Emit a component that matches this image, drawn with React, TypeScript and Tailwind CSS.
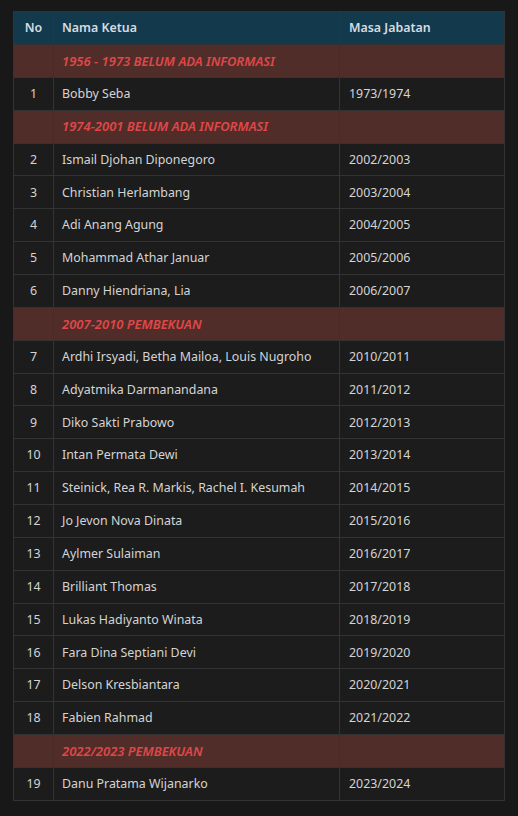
import React from "react";

type Row = { type: "section"; text: string } | { type: "data"; no: number; name: string; masa: string };

const rows: Row[] = [
  { type: "section", text: "1956 - 1973 BELUM ADA INFORMASI" },
  { type: "data", no: 1, name: "Bobby Seba", masa: "1973/1974" },
  { type: "section", text: "1974-2001 BELUM ADA INFORMASI" },
  { type: "data", no: 2, name: "Ismail Djohan Diponegoro", masa: "2002/2003" },
  { type: "data", no: 3, name: "Christian Herlambang", masa: "2003/2004" },
  { type: "data", no: 4, name: "Adi Anang Agung", masa: "2004/2005" },
  { type: "data", no: 5, name: "Mohammad Athar Januar", masa: "2005/2006" },
  { type: "data", no: 6, name: "Danny Hiendriana, Lia", masa: "2006/2007" },
  { type: "section", text: "2007-2010 PEMBEKUAN" },
  { type: "data", no: 7, name: "Ardhi Irsyadi, Betha Mailoa, Louis Nugroho", masa: "2010/2011" },
  { type: "data", no: 8, name: "Adyatmika Darmanandana", masa: "2011/2012" },
  { type: "data", no: 9, name: "Diko Sakti Prabowo", masa: "2012/2013" },
  { type: "data", no: 10, name: "Intan Permata Dewi", masa: "2013/2014" },
  { type: "data", no: 11, name: "Steinick, Rea R. Markis, Rachel I. Kesumah", masa: "2014/2015" },
  { type: "data", no: 12, name: "Jo Jevon Nova Dinata", masa: "2015/2016" },
  { type: "data", no: 13, name: "Aylmer Sulaiman", masa: "2016/2017" },
  { type: "data", no: 14, name: "Brilliant Thomas", masa: "2017/2018" },
  { type: "data", no: 15, name: "Lukas Hadiyanto Winata", masa: "2018/2019" },
  { type: "data", no: 16, name: "Fara Dina Septiani Devi", masa: "2019/2020" },
  { type: "data", no: 17, name: "Delson Kresbiantara", masa: "2020/2021" },
  { type: "data", no: 18, name: "Fabien Rahmad", masa: "2021/2022" },
  { type: "section", text: "2022/2023 PEMBEKUAN" },
  { type: "data", no: 19, name: "Danu Pratama Wijanarko", masa: "2023/2024" },
];

export default function App() {
  return (
    <div
      className="min-h-[816px] w-[518px] bg-[#181818] px-[13px] pt-[11px] text-[12.4px] text-[#d4d4d4]"
      style={{ fontFamily: '"Noto Sans", "Open Sans", sans-serif' }}
    >
      <table className="w-[492px] table-fixed border-collapse">
        <colgroup>
          <col className="w-[40px]" />
          <col className="w-[286px]" />
          <col />
        </colgroup>
        <thead>
          <tr className="h-[33px] bg-[#133a4c] text-[#d5dde4]">
            <th className="border border-[#333333] p-0 pt-[1px] text-center font-semibold">No</th>
            <th className="border border-[#333333] p-0 pt-[1px] pl-[8px] text-left font-semibold">Nama Ketua</th>
            <th className="border border-[#333333] p-0 pt-[1px] pl-[9px] text-left font-semibold">Masa Jabatan</th>
          </tr>
        </thead>
        <tbody>
          {rows.map((r, i) =>
            r.type === "section" ? (
              <tr key={i} className="h-[32.87px] bg-[#512d2a]">
                <td className="border border-[#333333] p-0"></td>
                <td className="border border-[#333333] p-0 pt-[1px] pl-[8px] text-[13px] font-semibold italic text-[#e04848]">{r.text}</td>
                <td className="border border-[#333333] p-0"></td>
              </tr>
            ) : (
              <tr key={i} className="h-[32.87px] bg-[#1c1c1c]">
                <td className="border border-[#333333] p-0 pt-[1px] text-center">{r.no}</td>
                <td className="border border-[#333333] p-0 pt-[1px] pl-[8px]">{r.name}</td>
                <td className="border border-[#333333] p-0 pt-[1px] pl-[9px]">{r.masa}</td>
              </tr>
            )
          )}
        </tbody>
      </table>
    </div>
  );
}
